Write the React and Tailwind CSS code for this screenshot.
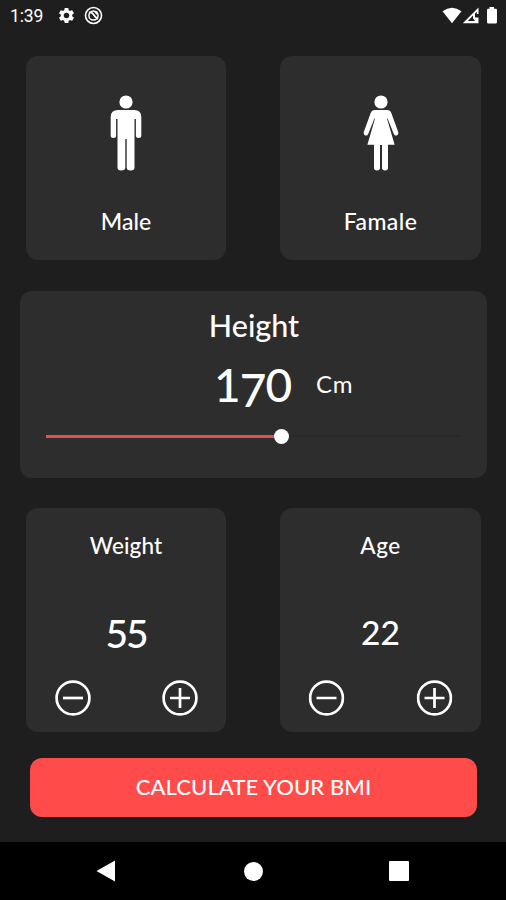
import React from "react";
import { MdSettings } from "react-icons/md";

function Person({ female }) {
  return (
    <svg width="40" height="78" viewBox="0 0 40 78" fill="#fff">
      <circle cx="20" cy="8" r="6.6" />
      {female ? (
        <path d="M14 16H26Q29.3 16 30.3 19L37.3 38.3Q37.8 40.6 35.8 41.4Q33.8 42 32.8 40L26.6 24.5H26L33.6 50.7H27V74Q27 76.4 24 76.4Q21 76.4 21 74V51H19V74Q19 76.4 16 76.4Q13 76.4 13 74V50.7H6.4L14 24.5H13.4L7.2 40Q6.2 42 4.2 41.4Q2.2 40.6 2.7 38.3L9.7 19Q10.7 16 14 16Z" />
      ) : (
        <path d="M12 16H28Q35.3 16 35.3 23V41.5Q35.3 44 32.6 44Q29.9 44 29.9 41.5V25H28.5V73.5Q28.5 76.5 24.8 76.5Q20.7 76.5 20.7 73.5V45H19.3V73.5Q19.3 76.5 15.2 76.5Q11.5 76.5 11.5 73.5V25H10.1V41.5Q10.1 44 7.4 44Q4.7 44 4.7 41.5V23Q4.7 16 12 16Z" />
      )}
    </svg>
  );
}

function RoundButton({ plus }) {
  return (
    <button className="size-9" aria-label={plus ? "Increase" : "Decrease"}>
      <svg width="36" height="36" viewBox="0 0 36 36" fill="none" stroke="#fff" strokeWidth="2.7">
        <circle cx="18" cy="18" r="16.4" />
        <path d={plus ? "M8 18H28M18 8V28" : "M8 18H28"} />
      </svg>
    </button>
  );
}

function GenderCard({ label, female, tracking }) {
  return (
    <div className="flex h-[204px] flex-col items-center rounded-xl bg-[#2d2d2d] pt-[38px]">
      <Person female={female} />
      <span className={`mt-[32px] text-[23px] font-medium leading-[34px] ${tracking}`}>{label}</span>
    </div>
  );
}

function CounterCard({ label, labelStyle, value, valueStyle, buttons }) {
  return (
    <div className="flex h-[224px] flex-col items-center rounded-xl bg-[#2d2d2d] pt-[21px]">
      <span className={`text-[22.5px] font-medium leading-[34px] ${labelStyle}`}>{label}</span>
      <span className={`mt-[45px] h-[50px] font-medium ${valueStyle}`}>{value}</span>
      <div className={`mt-[22px] flex justify-between ${buttons}`}>
        <RoundButton />
        <RoundButton plus />
      </div>
    </div>
  );
}

function StatusBar() {
  return (
    <header className="flex h-[31px] items-center pl-[10px] pr-[7px]">
      <span className="w-[47px] pt-[2px] font-['Roboto',sans-serif] text-[17.5px] tracking-[-0.1px]">1:39</span>
      <MdSettings size={19} />
      <svg className="ml-[8px]" width="19" height="19" viewBox="0 0 19 19" fill="none" stroke="#fff">
        <circle cx="9.5" cy="9.5" r="8" strokeWidth="1.6" />
        <circle cx="9.5" cy="9.5" r="4.6" strokeWidth="1.5" />
        <path d="M5 6.5Q8 5.8 9.5 8.5T14 13" strokeWidth="1.7" />
        <path d="M9.5 5.5L13.5 9.5V5.5Z" fill="#fff" stroke="none" />
      </svg>
      <svg className="ml-auto" width="57" height="19" viewBox="0 0 57 19" fill="#fff">
        <path d="M0.5 5.2Q10 -1.8 19.5 5.2L10 17.2Z" />
        <path fillRule="evenodd" d="M36.5 1.5V8H34.8V5.8L33 7.6V11.5H36.5V17.2H20.8ZM31 9.6L25.8 15.1H33L31 12.5Z" />
        <path d="M47.5 1H52V2.8H54Q55 2.8 55 4V16Q55 17.5 53.7 17.5H46.3Q45 17.5 45 16V4Q45 2.8 46 2.8H47.5Z" />
      </svg>
    </header>
  );
}

export default function App() {
  return (
    <div className="flex h-[900px] w-[506px] flex-col overflow-hidden bg-[#1e1e1e] font-['Lato','Open_Sans',sans-serif] text-white">
      <StatusBar />
      <main className="flex flex-1 flex-col pt-[25px]">
        <section className="grid grid-cols-[200px_201px] justify-between pl-[26px] pr-[25px]">
          <GenderCard label="Male" tracking="tracking-[0px]" />
          <GenderCard label="Famale" female tracking="tracking-[0.4px]" />
        </section>

        <section className="ml-[20px] mt-[31px] flex h-[187px] w-[467px] flex-col rounded-xl bg-[#2d2d2d] pt-[13px]">
          <h2 className="pl-px text-center text-[30.5px] font-medium leading-[42px]">Height</h2>
          <div className="mt-[9px] flex h-[60px] items-center pl-[194px]">
            <span className="w-[102px] text-[46px] font-medium leading-[60px] tracking-[-1px]">
              1<span className="inline-block translate-y-[5px]">7</span>0
            </span>
            <span className="pb-[2px] text-[24px] leading-[30px] tracking-[0.8px]">Cm</span>
          </div>
          <div className="ml-[26px] mt-[13px] flex h-4 w-[416px] items-center">
            <div className="h-[3px] w-[228px] bg-[#df504e]" />
            <div className="size-[15px] rounded-full bg-white" />
            <div className="h-[2px] flex-1 bg-[#292929]" />
          </div>
        </section>

        <section className="mt-[30px] grid grid-cols-[200px_201px] justify-between pl-[26px] pr-[25px]">
          <CounterCard label="Weight" labelStyle="tracking-[0.1px]" value="55" valueStyle="text-[39px] leading-[51px] tracking-[-2px]" buttons="w-[143px]" />
          <CounterCard label="Age" labelStyle="tracking-[0.5px]" value="22" valueStyle="text-[33.5px] leading-[48px]" buttons="w-[144px] -translate-x-[0.5px]" />
        </section>

        <button className="ml-[30px] mt-[26px] h-[59px] w-[447px] rounded-xl bg-[#ff4c4b] pb-[2px] text-[22px] font-medium tracking-[0.1px]">
          CALCULATE YOUR BMI
        </button>
      </main>
      <nav className="flex h-[58px] items-center bg-black pl-[96px]">
        <svg width="20" height="22" viewBox="0 0 20 22"><path d="M0.5 11L19 0.5V21.5Z" fill="#fff" /></svg>
        <div className="ml-[128px] size-[19px] rounded-full bg-white" />
        <div className="ml-[126px] size-5 rounded-[1px] bg-white" />
      </nav>
    </div>
  );
}
